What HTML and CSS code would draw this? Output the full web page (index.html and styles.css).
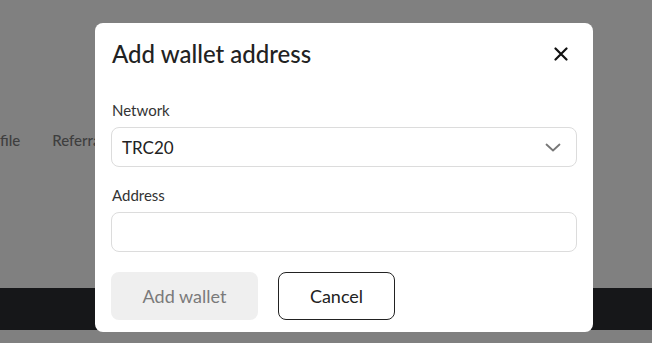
FILE: index.html
```html
<!DOCTYPE html>
<html lang="en">
<head>
<meta charset="utf-8">
<title>Add wallet address</title>
<link rel="stylesheet" href="styles.css">
</head>
<body>
<div class="page">
  <nav class="tabs">
    <span class="tab">file</span>
    <span class="tab">Referral</span>
  </nav>
  <div class="footer-bar"></div>
</div>

<div class="modal" role="dialog" aria-labelledby="modal-title">
  <div class="modal-header">
    <h2 id="modal-title" class="modal-title">Add wallet address</h2>
    <button class="close-btn" aria-label="Close">
      <svg width="14" height="14" viewBox="0 0 14 14"><path d="M1.5 1.5L12.5 12.5M12.5 1.5L1.5 12.5" stroke="#111" stroke-width="2.2" stroke-linecap="round"/></svg>
    </button>
  </div>
  <div class="field">
    <label class="field-label">Network</label>
    <div class="select">
      <span class="select-value">TRC20</span>
      <svg class="chevron" width="16" height="9" viewBox="0 0 16 9"><path d="M1.5 1.5L8 7.5L14.5 1.5" fill="none" stroke="#777" stroke-width="1.8" stroke-linecap="round" stroke-linejoin="round"/></svg>
    </div>
  </div>
  <div class="field">
    <label class="field-label">Address</label>
    <div class="input"></div>
  </div>
  <div class="actions">
    <button class="btn btn-primary" disabled>Add wallet</button>
    <button class="btn btn-outline">Cancel</button>
  </div>
</div>
</body>
</html>
```

FILE: styles.css
```css
* { box-sizing: border-box; }
html, body { margin: 0; padding: 0; }
body {
  width: 652px;
  height: 343px;
  overflow: hidden;
  background: #808080;
  font-family: "Lato", "Noto Sans", sans-serif;
  position: relative;
}
.page {
  height: 343px;
  display: flex;
  flex-direction: column;
}
.tabs {
  display: flex;
  gap: 32px;
  padding-top: 130px;
  height: 288px;
}
.tab {
  font-size: 15px;
  line-height: 20px;
  color: #3e3e3e;
  font-weight: 500;
}
.footer-bar {
  height: 42px;
  background: #161719;
}
.modal {
  position: absolute;
  left: 95px;
  top: 23px;
  width: 498px;
  height: 309px;
  background: #fff;
  border-radius: 8px;
  padding: 15px 16px 12px 16px;
  display: flex;
  flex-direction: column;
}
.modal-header {
  display: flex;
  align-items: center;
  justify-content: space-between;
  height: 32px;
  margin-bottom: 30px;
}
.modal-title {
  margin: 0;
  padding-left: 1px;
  font-size: 24px;
  font-weight: 500;
  color: #222;
  line-height: 32px;
}
.close-btn {
  border: 0;
  background: none;
  padding: 0;
  margin-right: 9px;
  width: 14px;
  height: 14px;
  display: flex;
}
.field {
  display: flex;
  flex-direction: column;
}
.field + .field { margin-top: 18px; }
.field-label {
  font-size: 15px;
  line-height: 20px;
  color: #333;
  padding-left: 1px;
  margin-bottom: 7px;
}
.select, .input {
  height: 40px;
  border: 1px solid #dcdcdc;
  border-radius: 8px;
  display: flex;
  align-items: center;
}
.select {
  justify-content: space-between;
  padding: 0 15px 0 10px;
}
.select-value {
  font-size: 17px;
  color: #222;
}
.actions {
  display: flex;
  gap: 20px;
  margin-top: 20px;
}
.btn {
  height: 48px;
  border-radius: 8px;
  font-family: inherit;
  font-size: 18px;
}
.btn-primary {
  width: 147px;
  background: #efefef;
  border: 0;
  color: #7a7a7a;
}
.btn-outline {
  width: 117px;
  background: #fff;
  border: 1px solid #222;
  color: #222;
}
```
